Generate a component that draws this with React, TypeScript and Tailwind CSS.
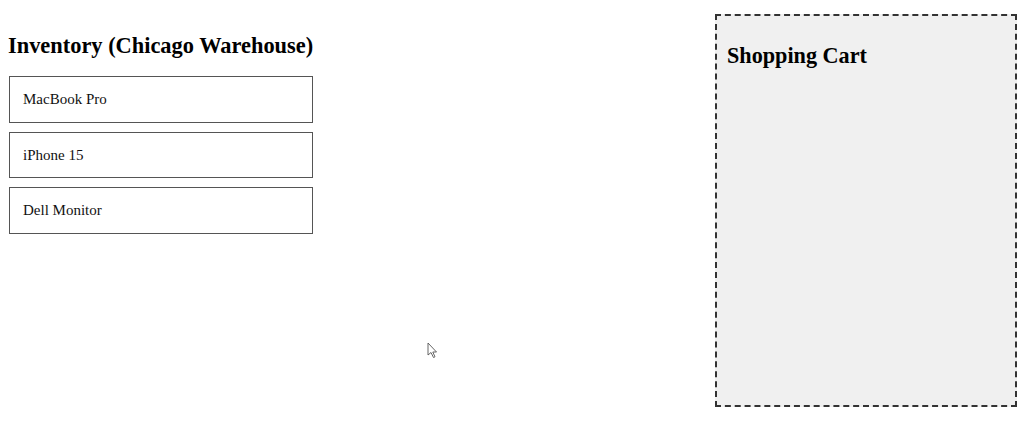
import React from "react";

const items = ["MacBook Pro", "iPhone 15", "Dell Monitor"];

export default function App() {
  return (
    <div
      className="relative flex h-[424px] w-[1024px] justify-between overflow-hidden bg-white text-black"
      style={{ fontFamily: '"Liberation Serif", "Times New Roman", serif' }}
    >
      <div className="w-[312px] pl-[8px] pt-[33px]">
        <h2 className="m-0 whitespace-nowrap text-[22.4px] font-bold leading-[25px]">Inventory (Chicago Warehouse)</h2>
        <div className="mt-[18px] flex flex-col gap-[9px] pl-[1px]">
          {items.map((it) => (
            <div
              key={it}
              className="h-[46.5px] w-[304px] border border-[#555] px-[13px] pt-[14px] text-[15px] leading-[17px] text-[#111]"
            >
              {it}
            </div>
          ))}
        </div>
      </div>
      <div className="mr-[7px] mt-[14px] h-[393px] w-[302px] border-2 border-dashed border-[#333] bg-[#f0f0f0] px-[10px] pt-[27px]">
        <h2 className="m-0 text-[22.2px] font-bold leading-[25px]">Shopping Cart</h2>
      </div>
      <svg
        className="absolute left-[427px] top-[342px]"
        width="12"
        height="17"
        viewBox="0 0 12 17"
      >
        <path
          d="M1 1 L1 13 L4 10.5 L6.5 15.5 L8 14.8 L5.8 10 L9.5 10 Z"
          fill="white"
          stroke="#555"
          strokeWidth="0.9"
          strokeLinejoin="round"
        />
      </svg>
    </div>
  );
}
